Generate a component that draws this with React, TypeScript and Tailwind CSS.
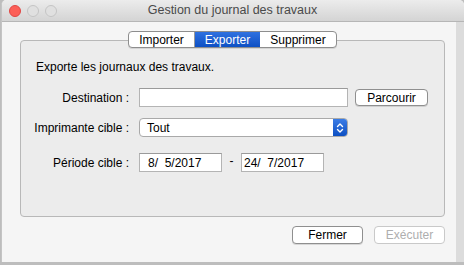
import React from "react";

const font = { fontFamily: '"Liberation Sans", Arial, sans-serif' };

const Field = ({ w, value, pad }: { w: string; value?: string; pad?: string }) => (
	<div
		className={`${w} ${pad ?? "pl-[6px]"} h-[19px] bg-white border border-[#b4b4b4] border-t-[#9a9a9a] flex items-center whitespace-pre text-[12px] text-black`}
	>
		{value}
	</div>
);

const Button = ({ label, disabled }: { label: string; disabled?: boolean }) => (
	<div
		className={`h-[18px] flex items-center justify-center rounded-[4px] border bg-white text-[12px] ${
			disabled
				? "border-[#c9c9c9] text-[#aeaeae]"
				: "border-[#8f8f8f] text-black shadow-[0_1px_0_rgba(0,0,0,0.12)]"
		}`}
	>
		{label}
	</div>
);

const App = () => {
	return (
		<div style={font} className="w-[464px] h-[265px] bg-[#bdbdbd] overflow-hidden">
			<div className="w-[463px] h-[262px] ml-[1px] flex flex-col bg-[#f5f5f5] border-l border-[#c4c4c4] rounded-t-[5px] overflow-hidden">
				{/* title bar */}
				<div className="h-[22px] shrink-0 flex items-center bg-gradient-to-b from-[#ececec] to-[#d4d4d4] border-b border-[#b6b6b6]">
					<div className="flex items-center gap-[6px] pl-[7px]">
						<span className="w-[12px] h-[12px] rounded-full bg-[#fc5f57] border border-[#df4744]" />
						<span className="w-[12px] h-[12px] rounded-full bg-[#e0e0e0] border border-[#c4c4c4]" />
						<span className="w-[12px] h-[12px] rounded-full bg-[#e0e0e0] border border-[#c4c4c4]" />
					</div>
					<div className="flex-1 text-center text-[12.5px] text-[#4a4a4a] pr-[56px]">
						Gestion du journal des travaux
					</div>
				</div>

				<div className="flex-1 flex border-r-[8px] border-[#dcdcdc]">
					<div className="flex-1 flex flex-col pl-[18px] pr-[11px] pt-[9px]">
						{/* tabs */}
						<div className="flex justify-center relative z-10 -mb-[8px]">
							<div className="flex h-[17px] rounded-[4px] border border-[#8e8e8e] bg-white overflow-hidden text-[12px] shadow-[0_1px_0_rgba(0,0,0,0.1)]">
								<div className="w-[66px] flex items-center justify-center text-black border-r border-[#9a9a9a]">
									Importer
								</div>
								<div className="w-[65px] flex items-center justify-center text-white bg-gradient-to-b from-[#2f71e0] to-[#0d50c4]">
									Exporter
								</div>
								<div className="w-[76px] flex items-center justify-center text-black">
									Supprimer
								</div>
							</div>
						</div>

						{/* group box */}
						<div className="h-[177px] bg-[#ececec] border border-[#b8b8b8] rounded-[4px] flex flex-col text-[12px] text-black">
							<div className="pl-[15px] pt-[18px] leading-[16px]">
								Exporte les journaux des travaux.
							</div>

							<div className="flex items-center mt-[13px]">
								<div className="w-[108px] text-right">Destination :</div>
								<div className="ml-[10px]">
									<Field w="w-[209px]" />
								</div>
								<div className="ml-[7px] w-[73px] h-[17px] flex items-center justify-center rounded-[4px] border border-[#8f8f8f] bg-white shadow-[0_1px_0_rgba(0,0,0,0.12)]">
									Parcourir
								</div>
							</div>

							<div className="flex items-center mt-[11px]">
								<div className="w-[108px] text-right">Imprimante cible :</div>
								<div className="ml-[10px] w-[209px] h-[19px] flex rounded-[4px] border border-[#a9a9a9] bg-white overflow-hidden">
									<div className="flex-1 pl-[7px] flex items-center">Tout</div>
									<div className="w-[14px] bg-gradient-to-b from-[#3a7ce6] to-[#0b4fc2] flex items-center justify-center">
										<svg width="8" height="12" viewBox="0 0 8 12" fill="none" stroke="white" strokeWidth="1.4" strokeLinecap="round" strokeLinejoin="round">
											<path d="M1.5 4.5 L4 2 L6.5 4.5" />
											<path d="M1.5 7.5 L4 10 L6.5 7.5" />
										</svg>
									</div>
								</div>
							</div>

							<div className="flex items-center mt-[16px]">
								<div className="w-[108px] text-right">Période cible :</div>
								<div className="ml-[10px]">
									<Field w="w-[83px]" pad="pl-[8px]" value={"8/  5/2017"} />
								</div>
								<div className="w-[19px] text-center -mt-[3px]">-</div>
								<Field w="w-[83px]" pad="pl-[2px]" value={"24/  7/2017"} />
							</div>
						</div>

						{/* bottom buttons */}
						<div className="flex justify-end gap-[11px] mt-[9px]">
							<div className="w-[71px]">
								<Button label="Fermer" />
							</div>
							<div className="w-[71px]">
								<Button label="Exécuter" disabled />
							</div>
						</div>
					</div>
				</div>
			</div>
		</div>
	);
};

export default App;
